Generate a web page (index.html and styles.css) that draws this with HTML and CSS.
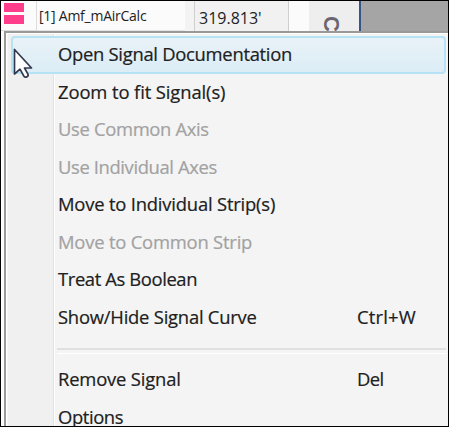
FILE: index.html
```html
<!DOCTYPE html>
<html lang="en">
<head>
<meta charset="utf-8">
<title>Signal menu</title>
<link rel="stylesheet" href="styles.css">
</head>
<body>
<main class="window">
  <header class="signal-row">
    <div class="marker"><i></i><i></i></div>
    <div class="name"><span>[1] Amf_mAirCalc</span></div>
    <div class="gap"></div>
    <div class="value"><span>319.813'</span></div>
    <div class="blank"></div>
    <div class="axis"><span>C</span></div>
    <div class="backdrop"></div>
  </header>
  <ul class="menu">
    <li class="item active"><span class="l1">Open Signal Documentation</span></li>
    <li class="item"><span class="l2">Zoom to fit Signal(s)</span></li>
    <li class="item disabled"><span class="l3">Use Common Axis</span></li>
    <li class="item disabled"><span class="l4">Use Individual Axes</span></li>
    <li class="item"><span class="l5">Move to Individual Strip(s)</span></li>
    <li class="item disabled"><span class="l6">Move to Common Strip</span></li>
    <li class="item"><span class="l7">Treat As Boolean</span></li>
    <li class="item"><span class="l8">Show/Hide Signal Curve</span><kbd class="k1">Ctrl+W</kbd></li>
    <li class="separator"></li>
    <li class="item"><span class="l9">Remove Signal</span><kbd class="k2">Del</kbd></li>
    <li class="item"><span class="l10">Options</span></li>
  </ul>
  <svg class="cursor" viewBox="0 0 20 31" width="20" height="31">
    <path d="M1.5 1.5V26L7 21.2L10.8 28Q12 30 14 28.7Q15.8 27.6 14.8 25.8L11.5 20H18.5Z" fill="#fff" stroke="#34394f" stroke-width="1.7" stroke-linejoin="round"/>
  </svg>
</main>
</body>
</html>
```

FILE: styles.css
```css
* { box-sizing: border-box; }
body { margin: 0; font-family: "Open Sans", "Noto Sans", sans-serif; }
.window {
  position: relative;
  width: 449px;
  height: 427px;
  border: 1px solid #000;
  background: #fbfbfb;
  overflow: hidden;
}
.signal-row { display: flex; height: 30px; color: #222; white-space: nowrap; }
.marker {
  width: 36px;
  padding: 2px 0 0 3px;
  border-right: 1px solid #dcdcdc;
  border-bottom: 1px solid #dcdcdc;
}
.marker i { display: block; width: 20px; height: 9px; margin-bottom: 3px; background: #ff3d8b; }
.name {
  width: 148px;
  padding-left: 2px;
  font-size: 14px;
  line-height: 29px;
  letter-spacing: -0.25px;
  border-bottom: 1px solid #e4e4e4;
}
.gap { width: 9px; background: #f3f3f3; }
.value {
  width: 95px;
  padding-left: 4px;
  background: #f1f1f1;
  border: solid #cfcfcf;
  border-width: 0 1px;
  font-size: 16px;
  line-height: 35px;
}
.blank { width: 20px; }
.axis { width: 50px; background: #eee; overflow: hidden; }
.axis span {
  display: block;
  width: 24px;
  margin: 11px 0 0 10px;
  font: bold 22px/24px "Liberation Sans", sans-serif;
  color: #6b6570;
  text-align: center;
  transform: rotate(90deg);
}
.backdrop { flex: 1; background: #a5a5a5; border-left: 2px solid #365486; }
.menu {
  height: 396px;
  margin: 0 0 0 3px;
  padding: 3px 2px 0 5px;
  list-style: none;
  border: solid #999;
  border-width: 2px 0 0 2px;
  box-shadow: inset 1px 1px #fff;
  background: linear-gradient(90deg, #f7f7f7 2px, #f0f0f0 2px, #f0f0f0 47px, #e2e2e2 47px, #e2e2e2 48px, #fff 48px, #fff 49px, #f4f4f4 49px);
}
.item {
  display: flex;
  height: 37.5px;
  padding-left: 46px;
  border: 1px solid transparent;
  font-size: 18.4px;
  line-height: 34px;
  color: #202020;
  -webkit-text-stroke: 0.2px;
  white-space: nowrap;
}
.item span { width: 299px; }
.active {
  border: 2px solid #b5e2f5;
  border-radius: 4px;
  padding-left: 45px;
  line-height: 32px;
  background: linear-gradient(#e9f2f7, #dcedf6);
}
.disabled { color: #a2a2a2; }
.separator { height: 25px; margin-left: 46px; padding-top: 12px; }
.separator::before { content: ""; display: block; height: 3px; border-top: 2px solid #e0e0e0; border-bottom: 1px solid #fff; }
kbd { font: inherit; }
.l1 { letter-spacing: -0.28px; }
.l2 { letter-spacing: -0.1px; }
.l3 { letter-spacing: -0.33px; }
.l4 { letter-spacing: -0.37px; }
.l5 { letter-spacing: -0.19px; }
.l6 { letter-spacing: -0.2px; }
.l7 { letter-spacing: -0.38px; }
.l8 { letter-spacing: -0.22px; }
.l9 { letter-spacing: -0.17px; }
.l10 { letter-spacing: -0.4px; }
.k1 { letter-spacing: 0.2px; }
.k2 { letter-spacing: -0.6px; }
.cursor { position: absolute; left: 12px; top: 47px; }
```
